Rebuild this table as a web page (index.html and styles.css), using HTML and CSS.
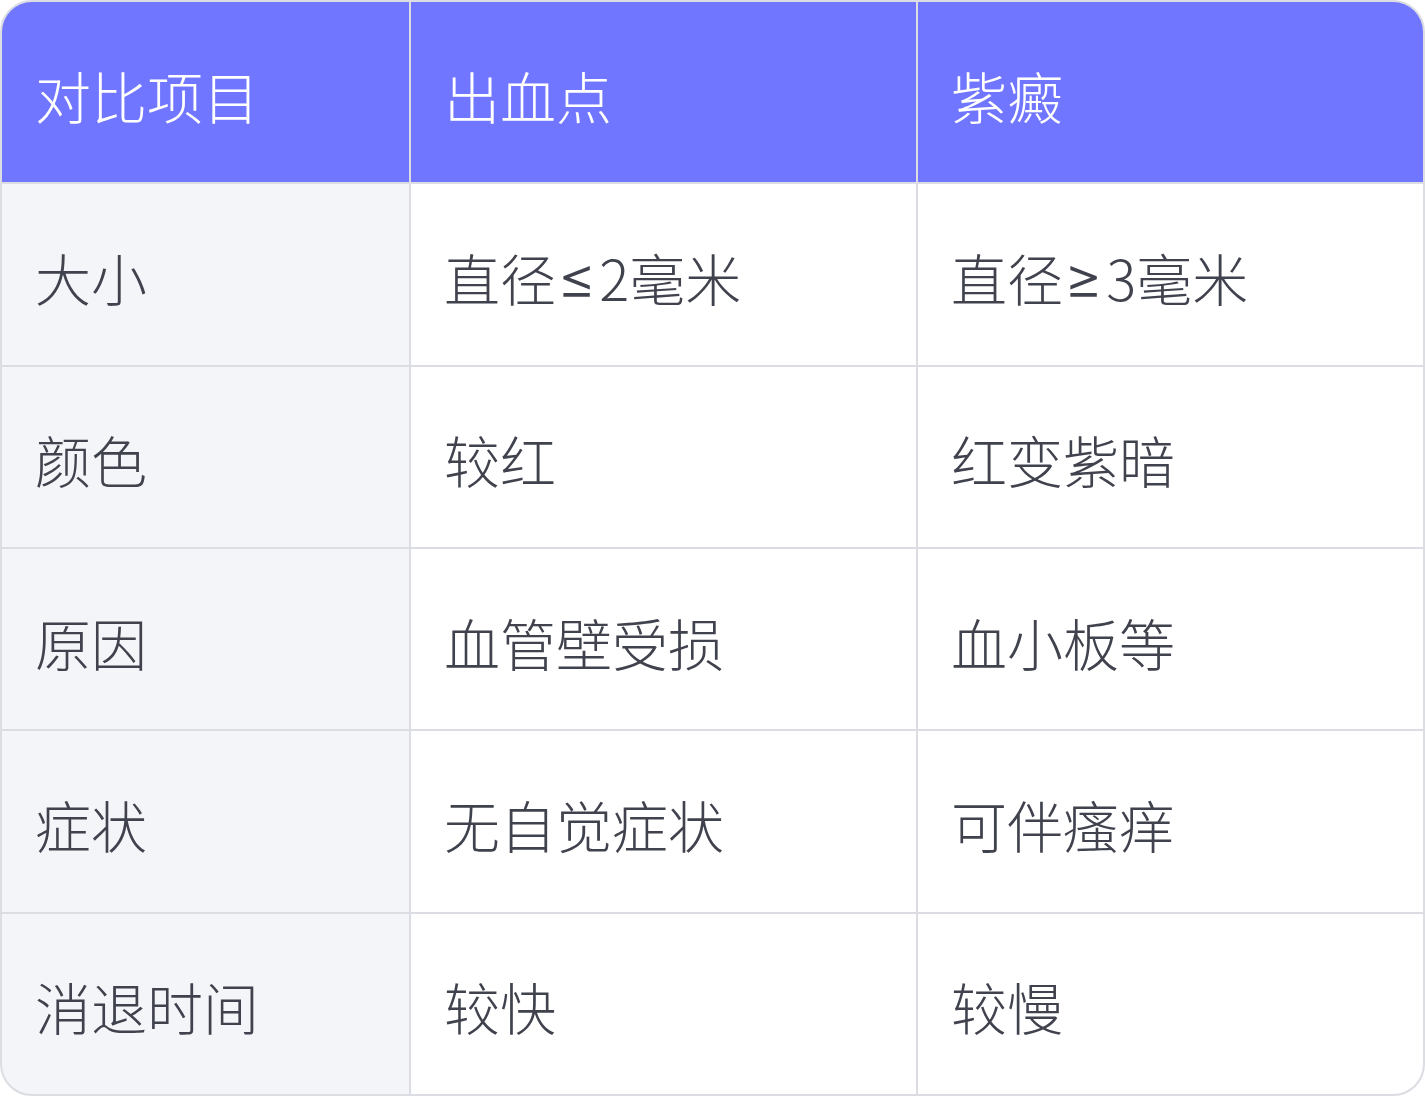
FILE: index.html
```html
<!DOCTYPE html>
<html lang="zh-CN">
<head>
<meta charset="utf-8">
<title>出血点与紫癜对比</title>
<link rel="stylesheet" href="styles.css">
</head>
<body>
<div class="table">
  <div class="cell head">对比项目</div>
  <div class="cell head">出血点</div>
  <div class="cell head">紫癜</div>

  <div class="cell label">大小</div>
  <div class="cell">直径<span class="sym">≤</span>2毫米</div>
  <div class="cell">直径<span class="sym">≥</span>3毫米</div>

  <div class="cell label">颜色</div>
  <div class="cell">较红</div>
  <div class="cell">红变紫暗</div>

  <div class="cell label">原因</div>
  <div class="cell">血管壁受损</div>
  <div class="cell">血小板等</div>

  <div class="cell label">症状</div>
  <div class="cell">无自觉症状</div>
  <div class="cell">可伴瘙痒</div>

  <div class="cell label">消退时间</div>
  <div class="cell">较快</div>
  <div class="cell">较慢</div>
</div>
</body>
</html>
```

FILE: styles.css
```css
html, body {
  margin: 0;
  padding: 0;
  background: #ffffff;
}
.table {
  box-sizing: border-box;
  width: 1425px;
  height: 1096px;
  border: 2px solid #dcdde3;
  border-radius: 32px;
  overflow: hidden;
  display: grid;
  grid-template-columns: 407px 1fr 1fr;
  grid-template-rows: repeat(6, 1fr);
  gap: 2px;
  background: #dcdde3;
  font-family: "Noto Sans CJK SC", "Noto Sans", sans-serif;
  font-weight: 300;
  font-size: 56px;
  color: #40424d;
}
.cell {
  background: #ffffff;
  display: flex;
  align-items: center;
  padding-left: 33px;
  padding-top: 5px;
  line-height: 1;
}
.cell.label {
  background: #f4f5f9;
}
.cell.head {
  background: #7076ff;
  color: #ffffff;
}
.sym {
  font-family: "Inter", "DejaVu Sans", sans-serif;
  font-weight: 300;
  font-size: 60px;
  margin: 0 3px 0 1px;
}
```
